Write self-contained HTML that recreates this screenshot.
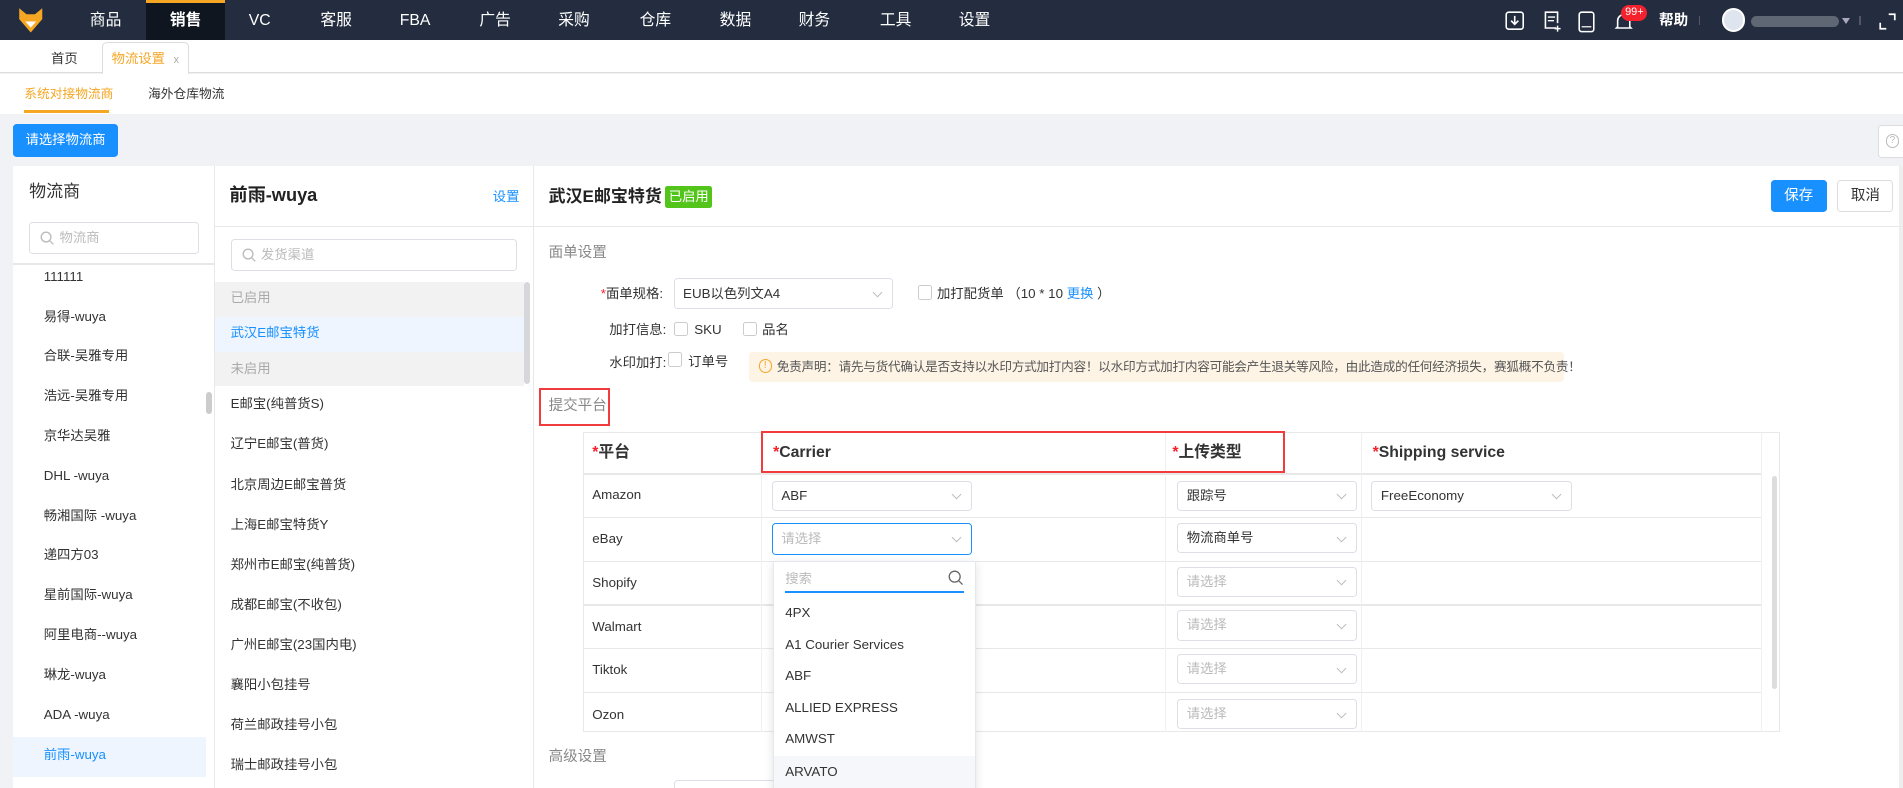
<!DOCTYPE html>
<html><head><meta charset="utf-8"><style>
*{box-sizing:border-box;margin:0;padding:0}
html,body{width:1903px;height:788px;overflow:hidden;background:#f0f2f5}
#root{zoom:1.21365;position:relative;width:1568px;height:649px;overflow:hidden;font-family:"Liberation Sans","Noto Sans CJK SC",sans-serif;font-size:12px;color:#333;background:#f0f2f5}
.a{position:absolute;white-space:nowrap;line-height:16px}
.nav{left:0;top:0;width:1568px;height:33px;background:#232d3f}
.nav .m{position:absolute;top:0;height:33px;line-height:35px;color:#fff;font-size:13px;width:66px;text-align:center}
.sel{position:absolute;border:1px solid #dcdfe6;border-radius:3px;background:#fff;height:26px;line-height:24px;padding-left:7px;font-size:12px;color:#333}
.sel:after{content:"";position:absolute;right:9px;top:8px;width:5px;height:5px;border-right:1px solid #bbb;border-bottom:1px solid #bbb;transform:rotate(45deg)}
.ph{color:#bbb}
.cb{position:absolute;width:12px;height:12px;border:1px solid #ccc;border-radius:2px;background:#fff}
.li{position:absolute;left:36px;font-size:11px;line-height:16px;color:#333;white-space:nowrap}
.mi{position:absolute;left:190px;font-size:11px;line-height:16px;color:#333;white-space:nowrap}
.hl{position:absolute;background:#e8e8e8}
.vl{position:absolute;background:#e8e8e8;width:1px}
.star{color:#f5222d}
</style></head><body><div id="root">
<div class="a nav">
 <svg style="position:absolute;left:15px;top:6px" width="21" height="22" viewBox="0 0 21 22"><path d="M1 1 L7 6 L14 6 L20 1 L20 10 L10.5 21 L1 10 Z" fill="#f5a623"/><path d="M6 12 L10.5 17 L15 12 Z" fill="#fff"/></svg>
 <div style="position:absolute;left:120px;top:0;width:65px;height:33px;background:#0f1620;border-top:3px solid #f5a623"></div>
 <div class="m" style="left:54px">商品</div><div class="m" style="left:120px;font-weight:bold">销售</div><div class="m" style="left:181px">VC</div><div class="m" style="left:244px">客服</div><div class="m" style="left:309px">FBA</div><div class="m" style="left:375px">广告</div><div class="m" style="left:440px">采购</div><div class="m" style="left:507px">仓库</div><div class="m" style="left:573px">数据</div><div class="m" style="left:638px">财务</div><div class="m" style="left:705px">工具</div><div class="m" style="left:770px">设置</div>
 <svg style="position:absolute;left:1240px;top:9px" width="16" height="16"><rect x="1" y="1" width="14" height="14" rx="2" fill="none" stroke="#fff" stroke-width="1.3"/><path d="M8 4v7M5 8l3 3 3-3" stroke="#fff" stroke-width="1.3" fill="none"/></svg>
 <svg style="position:absolute;left:1271px;top:9px" width="16" height="18"><path d="M11 14H2V1h10v9" fill="none" stroke="#fff" stroke-width="1.3"/><path d="M4 5h6M4 8h5M12 12v5M9.5 14.5h5" stroke="#fff" stroke-width="1.2"/></svg>
 <svg style="position:absolute;left:1300px;top:9px" width="14" height="18"><rect x="1" y="1" width="12" height="16" rx="2" fill="none" stroke="#fff" stroke-width="1.3"/><path d="M3 13h8" stroke="#fff"/></svg>
 <svg style="position:absolute;left:1330px;top:9px" width="16" height="18"><path d="M3 13V8a5 5 0 0 1 10 0v5l1 1H2z" fill="none" stroke="#fff" stroke-width="1.3"/></svg>
 <div style="position:absolute;left:1336px;top:4px;background:#f5222d;color:#fff;font-size:9px;border-radius:8px;padding:0 3px;height:13px;line-height:13px">99+</div>
 <div style="position:absolute;left:1367px;top:0;line-height:36px;color:#fff;font-size:12px;font-weight:bold">帮助</div>
 <div style="position:absolute;left:1400px;top:13px;width:1px;height:8px;background:#556"></div>
 <div style="position:absolute;left:1419px;top:7px;width:19px;height:19px;border-radius:50%;background:#dfe5ee;border:2px solid #fff"></div>
 <div style="position:absolute;left:1443px;top:13px;width:72px;height:9px;border-radius:5px;background:#5f6774"></div>
 <div style="position:absolute;left:1518px;top:15px;border-left:4px solid transparent;border-right:4px solid transparent;border-top:5px solid #aab"></div>
 <div style="position:absolute;left:1532px;top:13px;width:1px;height:8px;background:#556"></div>
 <svg style="position:absolute;left:1548px;top:11px" width="14" height="14"><path d="M1 8v5h5M8 1h5v5" fill="none" stroke="#fff" stroke-width="1.4"/></svg>
</div>
<div class="a" style="left:0;top:33px;width:1568px;height:27px;background:#fff;border-bottom:1px solid #ddd"></div>
<div class="a" style="left:42px;top:40px;font-size:11px">首页</div>
<div class="a" style="left:84px;top:35px;width:72px;height:26px;border:1px solid #ddd;border-bottom:none;border-radius:4px 4px 0 0;background:#fff"></div>
<div class="a" style="left:92px;top:40px;font-size:11px;color:#f5a623">物流设置 <span style="color:#aaa;font-size:9px;margin-left:4px">x</span></div>
<div class="a" style="left:0;top:61px;width:1568px;height:33px;background:#fff"></div>
<div class="a" style="left:20px;top:69px;font-size:10.5px;color:#f5a623">系统对接物流商</div>
<div class="a" style="left:20px;top:91px;width:70px;height:2px;background:#f5a623"></div>
<div class="a" style="left:122px;top:69px;font-size:10.5px">海外仓库物流</div>
<div class="a" style="left:11px;top:102px;width:86px;height:27px;background:#1890ff;border-radius:3px;color:#fff;font-size:11px;line-height:27px;text-align:center">请选择物流商</div>
<div class="a" style="left:1547px;top:103px;width:25px;height:27px;background:#fff;border:1px solid #ddd;border-radius:3px"><div style="margin:7px 0 0 6px;width:11px;height:11px;border:1px solid #bbb;border-radius:50%;font-size:8px;color:#bbb;text-align:center;line-height:10px">?</div></div>
<div class="a" style="left:11px;top:137px;width:1557px;height:520px;background:#fff"></div>
<div class="vl" style="left:176px;top:137px;height:520px"></div>
<div class="vl" style="left:439px;top:137px;height:520px"></div>
<div class="vl" style="left:1565px;top:137px;height:520px;background:#eee;width:3px"></div>
<div class="a" style="left:24px;top:150px;font-size:14px;color:#333">物流商</div>
<div class="a" style="left:24px;top:183px;width:140px;height:26px;border:1px solid #dcdfe6;border-radius:3px"></div>
<svg class="a" style="left:33px;top:190px" width="12" height="12"><circle cx="5" cy="5" r="4" fill="none" stroke="#bbb" stroke-width="1.1"/><path d="M8 8l3 3" stroke="#bbb"/></svg>
<div class="a" style="left:49px;top:188px;color:#bbb;font-size:11px">物流商</div>
<div class="hl" style="left:11px;top:217px;width:165px;height:1px"></div>
<div class="li" style="top:220px">111111</div>
<div class="li" style="top:253px">易得-wuya</div>
<div class="li" style="top:285px">合联-吴雅专用</div>
<div class="li" style="top:318px">浩远-吴雅专用</div>
<div class="li" style="top:351px">京华达吴雅</div>
<div class="li" style="top:384px">DHL -wuya</div>
<div class="li" style="top:417px">畅湘国际 -wuya</div>
<div class="li" style="top:449px">递四方03</div>
<div class="li" style="top:482px">星前国际-wuya</div>
<div class="li" style="top:515px">阿里电商--wuya</div>
<div class="li" style="top:548px">琳龙-wuya</div>
<div class="li" style="top:581px">ADA -wuya</div>
<div class="a" style="left:11px;top:607px;width:159px;height:33px;background:#eef5ff"></div>
<div class="li" style="top:614px;color:#1890ff">前雨-wuya</div>
<div class="a" style="left:170px;top:323px;width:5px;height:18px;border-radius:3px;background:#ccc"></div>
<div class="a" style="left:189px;top:153px;font-size:15px;font-weight:bold;color:#222">前雨-wuya</div>
<div class="a" style="left:406px;top:154px;color:#1890ff;font-size:11px">设置</div>
<div class="hl" style="left:176px;top:186px;width:1392px;height:1px"></div>
<div class="a" style="left:190px;top:197px;width:236px;height:26px;border:1px solid #dcdfe6;border-radius:3px"></div>
<svg class="a" style="left:199px;top:204px" width="12" height="12"><circle cx="5" cy="5" r="4" fill="none" stroke="#bbb" stroke-width="1.1"/><path d="M8 8l3 3" stroke="#bbb"/></svg>
<div class="a" style="left:215px;top:202px;color:#bbb;font-size:11px">发货渠道</div>
<div class="a" style="left:177px;top:232px;width:255px;height:29px;background:#f2f2f2"></div>
<div class="mi" style="top:237px;color:#aaa">已启用</div>
<div class="a" style="left:177px;top:261px;width:255px;height:29px;background:#eef5ff"></div>
<div class="mi" style="top:266px;color:#1890ff">武汉E邮宝特货</div>
<div class="a" style="left:177px;top:290px;width:255px;height:28px;background:#f2f2f2"></div>
<div class="mi" style="top:296px;color:#aaa">未启用</div>
<div class="a" style="left:432px;top:232px;width:5px;height:84px;border-radius:3px;background:#d5d7db"></div>
<div class="mi" style="top:325px">E邮宝(纯普货S)</div>
<div class="mi" style="top:358px">辽宁E邮宝(普货)</div>
<div class="mi" style="top:391px">北京周边E邮宝普货</div>
<div class="mi" style="top:424px">上海E邮宝特货Y</div>
<div class="mi" style="top:457px">郑州市E邮宝(纯普货)</div>
<div class="mi" style="top:490px">成都E邮宝(不收包)</div>
<div class="mi" style="top:523px">广州E邮宝(23国内电)</div>
<div class="mi" style="top:556px">襄阳小包挂号</div>
<div class="mi" style="top:589px">荷兰邮政挂号小包</div>
<div class="mi" style="top:622px">瑞士邮政挂号小包</div>
<div class="a" style="left:452px;top:154px;font-size:14px;font-weight:bold;color:#222">武汉E邮宝特货</div>
<div class="a" style="left:548px;top:153px;width:39px;height:18px;background:#52c41a;color:#fff;font-size:11px;line-height:18px;text-align:center;border-radius:2px">已启用</div>
<div class="a" style="left:1459px;top:148px;width:46px;height:27px;background:#1890ff;border-radius:3px;color:#fff;line-height:27px;text-align:center;font-size:12px">保存</div>
<div class="a" style="left:1514px;top:148px;width:46px;height:27px;border:1px solid #ddd;border-radius:3px;line-height:25px;text-align:center;font-size:12px">取消</div>
<div class="a" style="left:452px;top:201px;color:#888;font-size:12px">面单设置</div>
<div class="a" style="left:495px;top:234px;font-size:11px"><span class="star">*</span>面单规格:</div>
<div class="sel" style="left:555px;top:229px;width:181px;font-size:11px">EUB以色列文A4</div>
<div class="cb" style="left:756px;top:235px"></div>
<div class="a" style="left:772px;top:234px;font-size:11px">加打配货单 （10 * 10 <span style="color:#1890ff">更换</span> ）</div>
<div class="a" style="left:502px;top:264px;font-size:11px">加打信息:</div>
<div class="cb" style="left:555px;top:265px"></div><div class="a" style="left:572px;top:264px;font-size:11px">SKU</div>
<div class="cb" style="left:612px;top:265px"></div><div class="a" style="left:628px;top:264px;font-size:11px">品名</div>
<div class="a" style="left:502px;top:291px;font-size:11px">水印加打:</div>
<div class="cb" style="left:550px;top:290px"></div><div class="a" style="left:567px;top:290px;font-size:11px">订单号</div>
<div class="a" style="left:617px;top:290px;width:672px;height:25px;background:#fdf4e6;border-radius:3px"></div>
<div class="a" style="left:625px;top:296px;width:11px;height:11px;border:1px solid #f5a623;border-radius:50%;color:#f5a623;font-size:8px;line-height:10px;text-align:center">!</div>
<div class="a" style="left:640px;top:295px;font-size:10.4px;color:#555;letter-spacing:-0.2px">免责声明：请先与货代确认是否支持以水印方式加打内容！以水印方式加打内容可能会产生退关等风险，由此造成的任何经济损失，赛狐概不负责！</div>
<div class="a" style="left:444px;top:320px;width:59px;height:31px;border:2px solid #f03c3c"></div>
<div class="a" style="left:452px;top:327px;color:#888;font-size:12px">提交平台</div>
<div class="a" style="left:480px;top:356px;width:987px;height:247px;border:1px solid #e8e8e8"></div>
<div class="hl" style="left:480px;top:390px;width:971px;height:1px"></div>
<div class="hl" style="left:480px;top:426px;width:971px;height:1px"></div>
<div class="hl" style="left:480px;top:462px;width:971px;height:1px"></div>
<div class="hl" style="left:480px;top:498px;width:971px;height:1px"></div>
<div class="hl" style="left:480px;top:534px;width:971px;height:1px"></div>
<div class="hl" style="left:480px;top:570px;width:971px;height:1px"></div>
<div class="vl" style="left:627px;top:356px;height:247px;background:#f0f0f0"></div>
<div class="vl" style="left:960px;top:356px;height:247px;background:#f0f0f0"></div>
<div class="vl" style="left:1121px;top:356px;height:247px;background:#f0f0f0"></div>
<div class="vl" style="left:1451px;top:356px;height:247px;background:#f0f0f0"></div>
<div class="a" style="left:1460px;top:392px;width:4px;height:176px;border-radius:2px;background:#ddd"></div>
<div class="a" style="left:488px;top:365px;font-size:13px;font-weight:bold"><span class="star">*</span>平台</div>
<div class="a" style="left:637px;top:365px;font-size:13px;font-weight:bold"><span class="star">*</span>Carrier</div>
<div class="a" style="left:966px;top:365px;font-size:13px;font-weight:bold"><span class="star">*</span>上传类型</div>
<div class="a" style="left:1131px;top:365px;font-size:13px;font-weight:bold"><span class="star">*</span>Shipping service</div>
<div class="a" style="left:627px;top:355px;width:432px;height:35px;border:2px solid #f03c3c"></div>
<div class="a" style="left:488px;top:400px;font-size:11px">Amazon</div>
<div class="a" style="left:488px;top:436px;font-size:11px">eBay</div>
<div class="a" style="left:488px;top:472px;font-size:11px">Shopify</div>
<div class="a" style="left:488px;top:508px;font-size:11px">Walmart</div>
<div class="a" style="left:488px;top:544px;font-size:11px">Tiktok</div>
<div class="a" style="left:488px;top:581px;font-size:11px">Ozon</div>
<div class="sel" style="left:636px;top:396px;width:165px;height:25px;line-height:23px;font-size:11px">ABF</div>
<div class="sel" style="left:636px;top:431px;width:165px;height:26px;border-color:#1890ff;font-size:11px"><span class="ph">请选择</span></div>
<div class="sel" style="left:970px;top:396px;width:148px;height:25px;line-height:23px;font-size:11px">跟踪号</div>
<div class="sel" style="left:970px;top:431px;width:148px;height:25px;line-height:23px;font-size:11px">物流商单号</div>
<div class="sel" style="left:970px;top:467px;width:148px;height:25px;line-height:23px;font-size:11px"><span class="ph">请选择</span></div>
<div class="sel" style="left:970px;top:503px;width:148px;height:25px;line-height:23px;font-size:11px"><span class="ph">请选择</span></div>
<div class="sel" style="left:970px;top:539px;width:148px;height:25px;line-height:23px;font-size:11px"><span class="ph">请选择</span></div>
<div class="sel" style="left:970px;top:576px;width:148px;height:25px;line-height:23px;font-size:11px"><span class="ph">请选择</span></div>
<div class="sel" style="left:1130px;top:396px;width:165px;height:25px;line-height:23px;font-size:11px">FreeEconomy</div>
<div class="a" style="left:452px;top:616px;color:#888;font-size:12px">高级设置</div>
<div class="a" style="left:555px;top:643px;width:200px;height:20px;border:1px solid #dcdfe6;border-radius:3px"></div>
<div class="a" style="left:637px;top:462px;width:167px;height:200px;background:#fff;border:1px solid #e4e7ed;box-shadow:0 2px 8px rgba(0,0,0,.12)"></div>
<div class="a" style="left:647px;top:469px;color:#bbb;font-size:11px">搜索</div>
<svg class="a" style="left:781px;top:470px" width="13" height="13"><circle cx="5.5" cy="5.5" r="4.5" fill="none" stroke="#666" stroke-width="1.1"/><path d="M9 9l3 3" stroke="#666" stroke-width="1.1"/></svg>
<div class="a" style="left:647px;top:487px;width:147px;height:2px;background:#1890ff"></div>
<div class="a" style="left:647px;top:497px;font-size:11px">4PX</div>
<div class="a" style="left:647px;top:523px;font-size:11px">A1 Courier Services</div>
<div class="a" style="left:647px;top:549px;font-size:11px">ABF</div>
<div class="a" style="left:647px;top:575px;font-size:11px">ALLIED EXPRESS</div>
<div class="a" style="left:647px;top:601px;font-size:11px">AMWST</div>
<div class="a" style="left:638px;top:623px;width:165px;height:30px;background:#f5f7fa"></div>
<div class="a" style="left:647px;top:628px;font-size:11px">ARVATO</div>
</div></body></html>
